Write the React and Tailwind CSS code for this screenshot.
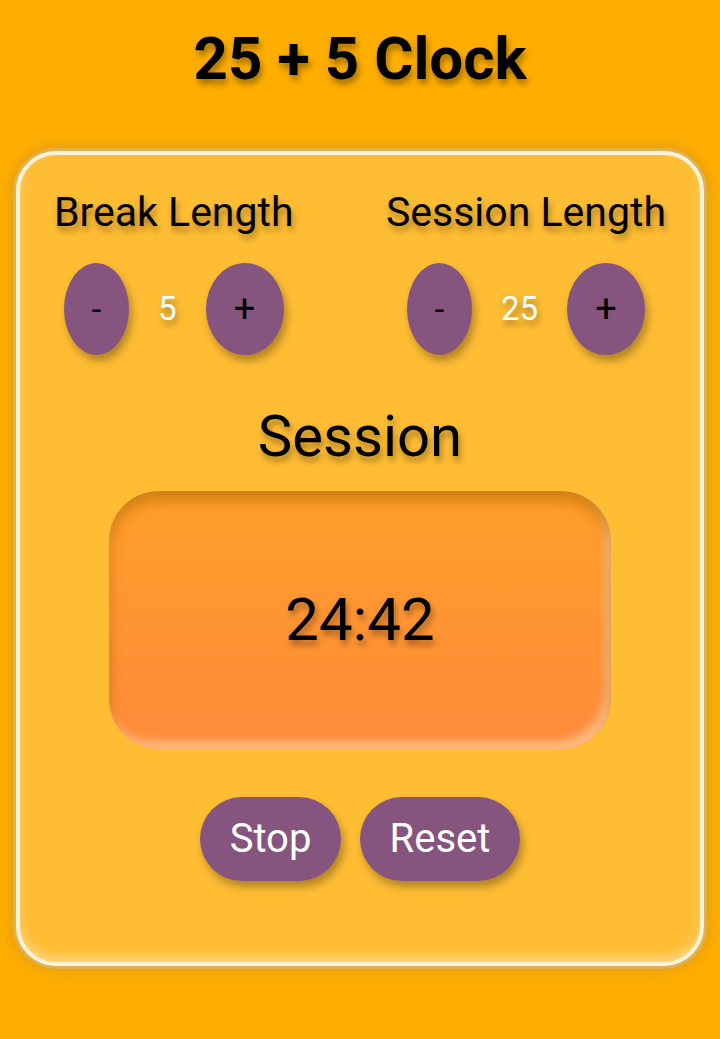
export default function App() {
  const shadow = "[text-shadow:2px_5px_6px_rgba(0,0,0,0.35)]";

  const Control = ({ label, value }) => (
    <div className="flex flex-col items-center">
      <h2 className={`text-[41px] leading-none ${shadow}`}>{label}</h2>
      <div className="mt-[30px] flex items-center gap-[29px]">
        <button className="h-[92px] w-[65px] rounded-[50%] bg-[#86557f] text-[34px] text-black shadow-[3px_6px_8px_rgba(0,0,0,0.3)]">
          -
        </button>
        <span className={`text-[33px] text-white ${shadow}`}>{value}</span>
        <button className="h-[92px] w-[78px] rounded-[50%] bg-[#86557f] text-[38px] text-black shadow-[3px_6px_8px_rgba(0,0,0,0.3)]">
          +
        </button>
      </div>
    </div>
  );

  return (
    <div className="min-h-[1039px] bg-[#ffae00] px-[16px] pt-[21px] font-['Roboto',sans-serif] text-black">
      <h1 className={`text-center text-[60px] font-bold leading-[76px] ${shadow}`}>
        25 + 5 Clock
      </h1>

      <div className="mt-[54px] h-[815px] rounded-[40px] border-4 border-[#fbf3dc] bg-[#ffbd33] shadow-[0_0_0_3px_#e0b24e,0_0_14px_6px_rgba(200,140,40,0.45),inset_0_-6px_10px_rgba(255,255,255,0.35)]">
        <div className="flex justify-between px-[34px] pt-[37px]">
          <Control label="Break Length" value="5" />
          <Control label="Session Length" value="25" />
        </div>

        <h2 className={`mt-[52px] text-center text-[58px] leading-none ${shadow}`}>
          Session
        </h2>

        <div className="mx-auto mt-[26px] flex h-[258px] w-[502px] items-center justify-center rounded-[50px] bg-gradient-to-b from-[#ff9f28] to-[#ff8a3a] shadow-[inset_0_10px_14px_rgba(150,90,0,0.45),inset_-6px_-8px_10px_rgba(255,220,180,0.6)]">
          <span className={`text-[60px] leading-none ${shadow}`}>24:42</span>
        </div>

        <div className="mt-[48px] flex justify-center gap-[19px]">
          <button className="h-[84px] w-[141px] rounded-full bg-[#86557f] text-[40px] text-white shadow-[3px_6px_8px_rgba(0,0,0,0.3)]">
            Stop
          </button>
          <button className="h-[84px] w-[160px] rounded-full bg-[#86557f] text-[40px] text-white shadow-[3px_6px_8px_rgba(0,0,0,0.3)]">
            Reset
          </button>
        </div>
      </div>
    </div>
  );
}
